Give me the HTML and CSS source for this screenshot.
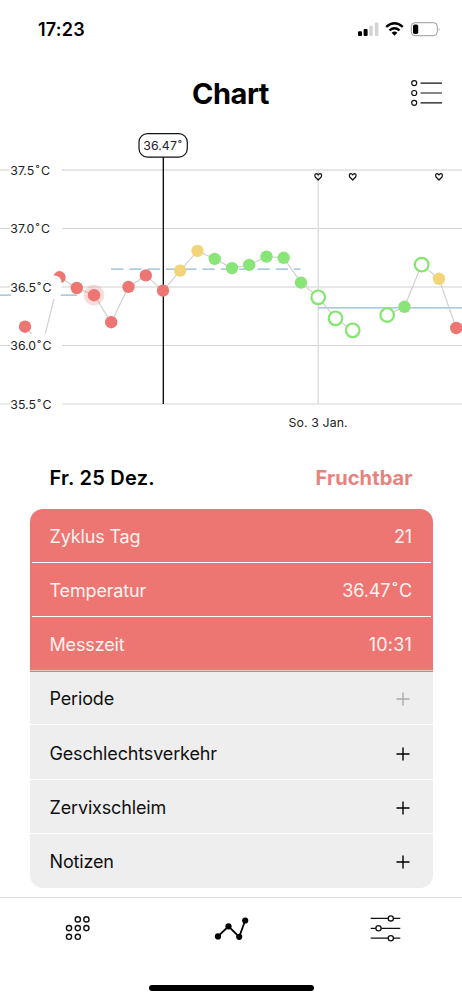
FILE: index.html
```html
<!DOCTYPE html>
<html lang="de">
<head>
<meta charset="utf-8">
<title>Chart</title>
<link rel="stylesheet" href="styles.css">
</head>
<body>
<div class="screen">
  <div class="status">
    <span class="clock">17:23</span>
    <svg class="status-icons" width="84" height="18" viewBox="357 20 84 18">
      <rect x="358" y="31.2" width="4" height="4.8" rx="1"/>
      <rect x="363.6" y="29" width="4" height="7" rx="1"/>
      <rect class="faint" x="369.2" y="25.8" width="3.6" height="10.2" rx="1"/>
      <rect class="faint" x="374.8" y="22.6" width="3.6" height="13.4" rx="1"/>
      <path class="wifi" d="M386.2 26.8 Q394.5 19.6 402.8 26.8 M389.5 30.4 Q394.5 26.2 399.5 30.4"/>
      <path d="M391.6 32.8 Q394.5 30.4 397.4 32.8 L394.5 35.7Z"/>
      <rect class="battery" x="411.3" y="22.7" width="26" height="13" rx="3.8"/>
      <rect x="413" y="24.4" width="5.2" height="9.6" rx="1.8"/>
      <path class="nub" d="M438.8 27.4 Q440.3 29.2 438.8 31Z"/>
    </svg>
  </div>

  <header class="header">
    <h1 class="title">Chart</h1>
    <svg class="list-icon" width="34" height="28" viewBox="410 79 34 28">
      <circle cx="414.2" cy="83.1" r="2.5"/><circle cx="414.2" cy="93" r="2.5"/><circle cx="414.2" cy="102.8" r="2.5"/>
      <path d="M420.5 83.1H442M420.5 93H442M420.5 102.8H442"/>
    </svg>
  </header>

  <svg class="chart" width="462" height="320" viewBox="0 120 462 320">
    <path class="grid" d="M0 228.5H462M0 345.5H462M0 404H462"/>
    <path class="grid wide" d="M0 170H462M0 287H462M318.2 170V404"/>
    <path class="cover" d="M0 295.2H77"/>
    <path class="cover dashed" d="M111 269.1H300.5"/>
    <path class="cover" d="M318.2 307.8H462"/>
    <path class="cursor" d="M163.3 157V404"/>
    <path class="trend" d="M25 326.7 42.2 346 59.5 277.3 76.8 288 94 295.2 111.2 322.2 128.5 286.9 145.8 275.4 163 290.6 180.2 270.6 197.5 250.9 214.7 258.9 232 268.1 249.2 264.9 266.5 256.6 283.7 257.8 301 282.6 318.2 297.3 335.5 318.3 352.7 330.3M387.2 315 404.5 306.8 421.7 264.6 439 278.8 456.2 328 466 321"/>
    <circle class="halo" cx="94" cy="295.2" r="10.4"/>
    <g class="red">
      <circle cx="25" cy="326.7" r="6.2"/><circle cx="59.5" cy="277.3" r="6.2"/><circle cx="76.8" cy="288" r="6.2"/><circle cx="94" cy="295.2" r="6.2"/><circle cx="111.2" cy="322.2" r="6.2"/><circle cx="128.5" cy="286.9" r="6.2"/><circle cx="145.8" cy="275.4" r="6.2"/><circle cx="163" cy="290.6" r="6.2"/><circle cx="456.2" cy="328" r="6.2"/>
    </g>
    <g class="yellow">
      <circle cx="180.2" cy="270.6" r="6.2"/><circle cx="197.5" cy="250.9" r="6.2"/><circle cx="439" cy="278.8" r="6.2"/>
    </g>
    <g class="green">
      <circle cx="214.7" cy="258.9" r="6.2"/><circle cx="232" cy="268.1" r="6.2"/><circle cx="249.2" cy="264.9" r="6.2"/><circle cx="266.5" cy="256.6" r="6.2"/><circle cx="283.7" cy="257.8" r="6.2"/><circle cx="301" cy="282.6" r="6.2"/><circle cx="404.5" cy="306.8" r="6.2"/>
    </g>
    <g class="ring">
      <circle cx="318.2" cy="297.3" r="6.8"/><circle cx="335.5" cy="318.3" r="6.8"/><circle cx="352.7" cy="330.3" r="6.8"/><circle cx="387.2" cy="315" r="6.8"/><circle cx="421.7" cy="264.6" r="6.8"/>
    </g>
    <g class="heart">
      <path d="M318.2 180 L315.2 177 Q314.1 174 316.3 173.7 Q317.6 173.7 318.2 175 Q318.8 173.7 320.1 173.7 Q322.4 174 321.2 177Z"/>
      <path d="M352.7 180 L349.7 177 Q348.6 174 350.8 173.7 Q352.1 173.7 352.7 175 Q353.3 173.7 354.6 173.7 Q356.9 174 355.7 177Z"/>
      <path d="M439 180 L436 177 Q434.9 174 437.1 173.7 Q438.4 173.7 439 175 Q439.6 173.7 440.9 173.7 Q443.2 174 442 177Z"/>
    </g>
    <g class="mask">
      <rect x="10" y="158" width="52" height="24" rx="5"/><rect x="10" y="217" width="52" height="23" rx="5"/><rect x="10" y="275.5" width="51.5" height="23.5" rx="7"/><rect x="10" y="334" width="52" height="23" rx="5"/><rect x="10" y="392" width="52" height="24" rx="5"/>
    </g>
    <g class="axis">
      <text x="10.3" y="174.5">37.5<tspan x="35.7">˚</tspan><tspan x="40.9">C</tspan></text>
      <text x="10.3" y="233">37.0<tspan x="35.7">˚</tspan><tspan x="40.9">C</tspan></text>
      <text x="10.3" y="291.5">36.5<tspan x="37.3">˚</tspan><tspan x="42.4">C</tspan></text>
      <text x="10.3" y="350">36.0<tspan x="37.3">˚</tspan><tspan x="42.4">C</tspan></text>
      <text x="10.3" y="408.5">35.5<tspan x="37.3">˚</tspan><tspan x="42.4">C</tspan></text>
      <text x="288.6" y="427" textLength="59">So. 3 Jan.</text>
    </g>
    <rect class="bubble" x="139" y="133.6" width="48.3" height="23.5" rx="8.5"/>
    <text class="bubble-text" x="143.2" y="150">36.47<tspan x="178">˚</tspan></text>
  </svg>

  <section class="detail">
    <div class="summary"><h2 class="date">Fr. 25 Dez.</h2><strong class="fertile">Fruchtbar</strong></div>
    <div class="card">
      <div class="row hot"><span>Zyklus Tag</span><span>21</span></div>
      <div class="row hot"><span>Temperatur</span><span>36.47<span class="degree">˚</span>C</span></div>
      <div class="row hot last"><span>Messzeit</span><span class="time">10:31</span></div>
      <div class="row"><span>Periode</span><svg class="plus dim" width="18" height="18" viewBox="0 0 18 18"><path d="M2.5 9H15.5M9 2.5V15.5"/></svg></div>
      <div class="row"><span>Geschlechtsverkehr</span><svg class="plus" width="18" height="18" viewBox="0 0 18 18"><path d="M2.5 9H15.5M9 2.5V15.5"/></svg></div>
      <div class="row"><span>Zervixschleim</span><svg class="plus" width="18" height="18" viewBox="0 0 18 18"><path d="M2.5 9H15.5M9 2.5V15.5"/></svg></div>
      <div class="row"><span>Notizen</span><svg class="plus" width="18" height="18" viewBox="0 0 18 18"><path d="M2.5 9H15.5M9 2.5V15.5"/></svg></div>
    </div>
  </section>

  <nav class="tabs">
    <div class="tab-row">
      <svg class="tab dots" width="28" height="28" viewBox="64 914 28 28">
        <circle cx="77.8" cy="919.4" r="2.6"/><circle cx="86.4" cy="919.4" r="2.6"/><circle cx="69" cy="928.1" r="2.6"/><circle cx="77.8" cy="928.1" r="2.6"/><circle cx="86.4" cy="928.1" r="2.6"/><circle cx="69" cy="936.8" r="2.6"/><circle cx="77.8" cy="936.8" r="2.6"/>
      </svg>
      <svg class="tab line" width="36" height="28" viewBox="214 914 36 28">
        <path d="M218 936.4 228.5 926.3 239.2 936.8 245.2 920.5"/>
        <circle cx="218" cy="936.4" r="3.1"/><circle cx="228.5" cy="926.3" r="3.1"/><circle cx="239.2" cy="936.8" r="3.1"/><circle cx="245.2" cy="920.5" r="3.1"/>
      </svg>
      <svg class="tab sliders" width="32" height="28" viewBox="370 914 32 28">
        <path d="M370.7 918.4H400.3M370.7 928.3H400.3M370.7 938.2H400.3"/>
        <circle cx="390.8" cy="918.4" r="2.6"/><circle cx="378.5" cy="928.3" r="2.6"/><circle cx="390.8" cy="938.2" r="2.6"/>
      </svg>
    </div>
    <div class="home-bar"></div>
  </nav>
</div>
</body>
</html>
```
FILE: styles.css
```css
* { box-sizing: border-box; }
body { margin: 0; background: #fff; color: #000; font-family: Inter, "Liberation Sans", sans-serif; }
.screen { width: 462px; height: 1000px; display: flex; flex-direction: column; overflow: hidden; }
.status { height: 60px; display: flex; justify-content: space-between; padding: 20px 21px 0 38px; }
.clock { font-size: 18px; line-height: 20px; font-weight: 600; letter-spacing: 0.2px; }
.status-icons { display: block; }
.faint { fill: #d4d4d4; }
.wifi { fill: none; stroke: #000; stroke-width: 2.4; }
.battery { fill: none; stroke: #999; stroke-width: 1; }
.nub { fill: #888; }
.header { height: 60px; display: grid; grid-template-columns: 1fr auto 1fr; align-items: start; padding: 0 19px 0 18px; }
.title { grid-column: 2; margin: 15px 0 0; font-size: 29px; line-height: 38px; font-weight: 700; letter-spacing: -0.5px; }
.list-icon { justify-self: end; margin: 19px -1px 0 0; fill: none; stroke: #111; stroke-width: 1.2; }
.chart { display: block; flex: none; font-family: Inter, sans-serif; }
.grid { stroke: #d4d4d4; stroke-width: 1; fill: none; }
.wide { stroke: #e0e0e0; stroke-width: 1.5; }
.cover { stroke: #8fb7d5; stroke-width: 1.2; }
.dashed { stroke-dasharray: 12.3 6; }
.cursor { stroke: #000; stroke-width: 1.3; }
.trend { fill: none; stroke: #d2d0d0; stroke-width: 1.2; }
.halo { fill: #ed7672; opacity: .25; }
.red { fill: #ed7672; }
.yellow { fill: #f2d578; }
.green { fill: #8ae578; }
.ring { fill: #fff; stroke: #82e66c; stroke-width: 2.2; }
.heart { fill: none; stroke: #111; stroke-width: 1.2; stroke-linejoin: round; }
.mask { fill: #fff; }
.axis { font-size: 12.3px; fill: #222; }
.bubble { fill: #fff; stroke: #111; stroke-width: 1.2; }
.bubble-text { font-size: 12.3px; letter-spacing: 0.1px; fill: #222; }
.detail { padding: 0 29.5px; height: 457px; }
.summary { height: 69px; display: flex; justify-content: space-between; align-items: flex-start; padding: 26px 20px 0; font-size: 20px; line-height: 25px; }
.date { margin: 0; font-size: 20px; font-weight: 600; letter-spacing: 0.25px; }
.fertile { color: #e7827e; font-weight: 700; letter-spacing: 0.1px; }
.card { height: 379px; border-radius: 13px; overflow: hidden; background: #eee; }
.row { height: 54.2px; padding: 1.5px 20.5px 0 20px; display: flex; align-items: center; justify-content: space-between; font-size: 18px; line-height: 24px; letter-spacing: -0.15px; background: linear-gradient(#fff, #fff) bottom / 100% 1.4px no-repeat; color: #111; }
.row:last-child { background: none; }
.hot { background-color: #ed7672; background-size: calc(100% - 4px) 1.4px; color: #fff3f1; }
.last { background-image: linear-gradient(#e6c8c8, #e6c8c8); background-size: 100% 1.4px; }
.degree { margin: 0 1.5px 0 2px; }
.time { letter-spacing: 0.2px; }
.plus { stroke: #000; stroke-width: 1.4; }
.dim { stroke: #aaa; }
.tabs { height: 103px; border-top: 1px solid #e2e2e2; display: flex; flex-direction: column; justify-content: space-between; align-items: center; padding: 16px 0 9px; }
.tab-row { width: 338px; display: flex; justify-content: space-between; align-self: flex-start; margin-left: 64px; }
.dots, .sliders { fill: #fff; stroke: #111; stroke-width: 1.3; }
.dots { stroke-width: 1.4; }
.line { fill: #000; margin-left: 2px; }
.line path { fill: none; stroke: #000; stroke-width: 1.8; }
.home-bar { width: 165px; height: 6px; border-radius: 3px; background: #000; }
```
